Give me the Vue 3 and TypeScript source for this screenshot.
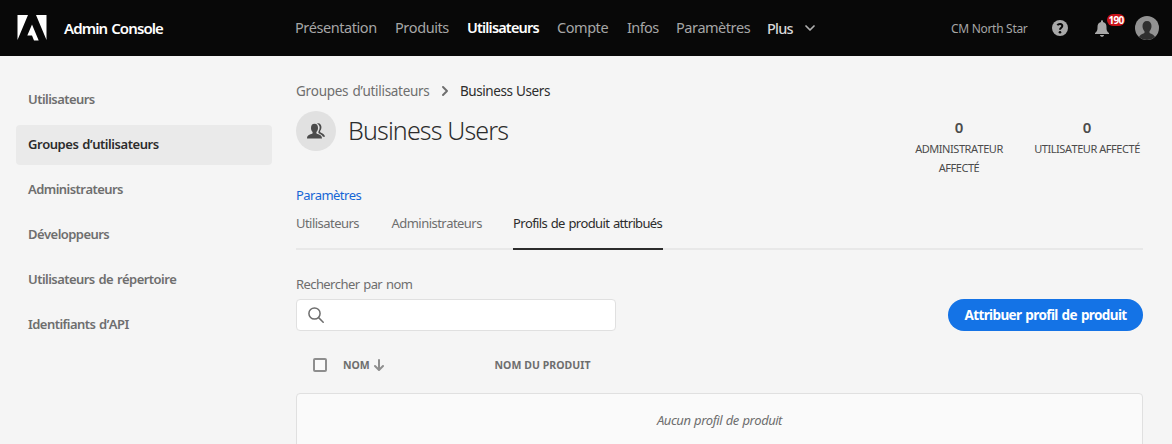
<script setup lang="ts">
interface NavItem { label: string; width: number; tracking: number; active?: boolean }

const navItems: NavItem[] = [
  { label: 'Présentation', width: 82, tracking: -0.45 },
  { label: 'Produits', width: 54, tracking: -0.45 },
  { label: 'Utilisateurs', width: 72, tracking: -0.83, active: true },
  { label: 'Compte', width: 52, tracking: -0.45 },
  { label: 'Infos', width: 31, tracking: -0.6 },
  { label: 'Paramètres', width: 73, tracking: -0.5 },
]
const sideItems = [
  'Utilisateurs',
  'Groupes d’utilisateurs',
  'Administrateurs',
  'Développeurs',
  'Utilisateurs de répertoire',
  'Identifiants d’API',
]
const activeSide = 1
const tabs = [
  { label: 'Utilisateurs', width: 63.5 },
  { label: 'Administrateurs', width: 89.5 },
  { label: 'Profils de produit attribués', width: 150 },
]
const activeTab = 2
</script>

<template>
  <div class="app">
    <header class="topbar">
      <svg class="logo" width="30" height="26" viewBox="0 0 30 26" fill="#fff">
        <path d="M0.5 0H11L0.5 25ZM19 0H29.500V25ZM15 9.500L21.700 25.500H17L15 20.500H10.300Z" />
      </svg>
      <span class="brand">Admin Console</span>
      <nav class="nav">
        <a
          v-for="item in navItems"
          :key="item.label"
          :class="{ active: item.active }"
          :style="{ width: item.width + 'px', letterSpacing: item.tracking + 'px' }"
        >{{ item.label }}</a>
        <a class="more">Plus
          <svg width="10" height="6" viewBox="0 0 10 6" fill="none" stroke="#b0b0b0" stroke-width="1.700" stroke-linecap="round" stroke-linejoin="round">
            <path d="M1 1L5 5L9 1" />
          </svg>
        </a>
      </nav>
      <span class="org">CM North Star</span>
      <svg class="help" width="16" height="16" viewBox="0 0 16 16">
        <circle cx="8" cy="8" r="8" fill="#a8a8a8" />
        <path d="M5.400 5.200C6.500 3.300 10.300 3.400 10.300 5.900C10.300 7.700 8 7.700 8 9.700" fill="none" stroke="#080808" stroke-width="2" />
        <circle cx="8" cy="12.200" r="1.300" fill="#080808" />
      </svg>
      <div class="bell">
        <svg width="14" height="17" viewBox="0 0 14 17" fill="#a8a8a8">
          <path d="M6 1.300C6 0 8 0 8 1.300V2C10.600 2.500 11.500 4.500 11.500 7C11.500 10.500 12 11.500 14 13V14H0V13C2 11.500 2.500 10.500 2.500 7C2.500 4.500 3.400 2.500 6 2ZM5 15H9C9 17.400 5 17.400 5 15Z" />
        </svg>
        <span class="badge">190</span>
      </div>
      <svg class="avatar" width="24" height="24" viewBox="0 0 24 24">
        <circle cx="12" cy="12" r="12" fill="#929292" />
        <path d="M12 5C14.900 5 16.500 7 16.500 10C16.500 12.500 15.600 14 14.500 15.200V16.800C15.500 18 18.500 18 20 20.900A12 12 0 0 1 4 20.900C5.500 18 8.500 18 9.500 16.800V15.200C8.400 14 7.500 12.500 7.500 10C7.500 7 9.100 5 12 5Z" fill="#303030" />
      </svg>
    </header>

    <div class="body">
      <aside class="sidebar">
        <a v-for="(item, i) in sideItems" :key="item" :class="{ active: i === activeSide }">{{ item }}</a>
      </aside>

      <main class="main">
        <div class="crumbs">
          <a>Groupes d’utilisateurs</a>
          <svg width="6" height="10" viewBox="0 0 6 10" fill="none" stroke="#6e6e6e" stroke-width="1.900" stroke-linecap="round" stroke-linejoin="round">
            <path d="M1 1L5 5L1 9" />
          </svg>
          <span>Business Users</span>
        </div>

        <div class="heading">
          <div class="group-icon">
            <svg width="18" height="16" viewBox="0 0 18 16" fill="#4b4b4b">
              <path d="M7.500 0.800C9.800 0.800 11 2.400 11 4.900C11 6.700 10.400 8 9.400 9V10.300C10.400 11.500 15 11.300 15 15.500H0C0 11.300 4.600 11.500 5.600 10.300V9C4.600 8 4 6.700 4 4.900C4 2.400 5.200 0.800 7.500 0.800Z" />
              <path d="M10 0.400C13.600 -0.600 15.300 3 14 6.400C13.600 7.400 12.900 7.900 13.100 8.800C13.600 10.200 17.500 10.300 18 13.800H16C15 11.200 12 10.900 11.400 9.700C11 8.600 12.400 7.500 12.600 5C12.800 2.800 12 1.400 10 0.400Z" />
            </svg>
          </div>
          <h1>Business Users</h1>
          <div class="stats">
            <div class="stat first"><b>0</b><span>ADMINISTRATEUR AFFECTÉ</span></div>
            <div class="stat second"><b>0</b><span>UTILISATEUR AFFECTÉ</span></div>
          </div>
        </div>

        <a class="settings">Paramètres</a>
        <div class="tabs">
          <a v-for="(tab, i) in tabs" :key="tab.label" :class="{ active: i === activeTab }" :style="{ width: tab.width + 'px' }">{{ tab.label }}</a>
        </div>

        <label class="search-label" for="search">Rechercher par nom</label>
        <div class="toolbar">
          <div class="search">
            <svg width="16" height="16" viewBox="0 0 16 16" fill="none" stroke="#6e6e6e" stroke-width="1.500" stroke-linecap="round">
              <circle cx="6.500" cy="6.500" r="5.600" />
              <path d="M10.600 10.600L15.200 15.200" />
            </svg>
            <input id="search" type="text" />
          </div>
          <button class="assign">Attribuer profil de produit</button>
        </div>

        <div class="table-head">
          <span class="check"></span>
          <span class="col-name">NOM</span>
          <svg class="sort" width="10" height="12" viewBox="0 0 10 12" fill="none" stroke="#8e8e8e" stroke-width="2" stroke-linecap="round" stroke-linejoin="round">
            <path d="M5 1V10.500M1 7L5 11L9 7" />
          </svg>
          <span class="col-product">NOM DU PRODUIT</span>
        </div>
        <div class="empty">Aucun profil de produit</div>
      </main>
    </div>
  </div>
</template>

<style>
body { background: #f5f5f5; overflow: hidden; }
</style>

<style scoped>
* { box-sizing: border-box; }
.app {
  width: 1172px;
  height: 444px;
  overflow: hidden;
  background: #f5f5f5;
  font-family: "Noto Sans", sans-serif;
  font-size: 13px;
  font-kerning: none;
  color: #6e6e6e;
  white-space: nowrap;
}
svg { display: block; flex: none; }
.topbar { display: flex; align-items: center; height: 56px; padding: 0 13px 0 17px; background: #080808; }
.brand { width: 231px; margin-left: 17px; color: #fff; font-size: 15px; font-weight: 600; letter-spacing: -0.9px; word-spacing: 1px; }
.nav { display: flex; gap: 18px; width: 656px; padding-bottom: 2px; color: #a6a6a6; font-size: 14.500px; line-height: 20px; }
.nav a { flex: none; }
.nav .active { color: #fff; font-weight: 600; }
.nav .more { display: flex; align-items: center; gap: 12.500px; padding-top: 1px; color: #d8d8d8; font-weight: 500; letter-spacing: -0.8px; }
.org { width: 77px; color: #a6a6a6; font-size: 12px; letter-spacing: -0.3px; }
.help { margin-left: 24px; }
.bell { position: relative; margin-left: 27px; }
.badge {
  position: absolute;
  top: -6px;
  left: 12px;
  width: 18px;
  height: 12px;
  border-radius: 6px;
  background: #c9131a;
  color: #fff;
  font-size: 10px;
  font-weight: 700;
  line-height: 12px;
  text-align: center;
  letter-spacing: -0.8px;
}
.avatar { margin-left: 26px; }
.body { display: flex; gap: 24px; padding: 0 29px 0 16px; }
.sidebar { display: flex; flex-direction: column; gap: 5px; width: 256px; padding-top: 24px; }
.sidebar a { height: 40px; padding-left: 12px; border-radius: 4px; font-weight: 600; line-height: 39px; letter-spacing: -0.55px; word-spacing: 1px; }
.sidebar .active { background: #eaeaea; color: #2c2c2c; letter-spacing: -0.45px; }
.main { width: 847px; padding-top: 25px; }
.crumbs { display: flex; align-items: center; height: 20px; letter-spacing: -0.43px; font-size: 13.500px; }
.crumbs a { width: 134px; letter-spacing: -0.3px; word-spacing: 1px; }
.crumbs svg { margin: 0 12px; }
.crumbs span { color: #2c2c2c; word-spacing: 0.500px; }
.heading { display: flex; height: 74px; margin-top: 10px; }
.group-icon { display: flex; align-items: center; justify-content: center; width: 40px; height: 40px; border-radius: 50%; background: #e1e1e1; }
h1 { margin: 0 0 0 12px; color: #2c2c2c; font-size: 25px; font-weight: 300; line-height: 38px; letter-spacing: -0.85px; }
.stats { display: flex; margin-right: 1px; margin-left: auto; gap: 18px; color: #4b4b4b; text-align: center; }
.stat { display: flex; flex-direction: column; width: 110px; }
.stat b { height: 19px; padding-top: 6px; font-size: 15px; font-weight: 600; line-height: 20px; }
.stat span { margin-top: 9px; font-size: 11px; font-weight: 400; line-height: 19px; white-space: normal; letter-spacing: -0.45px; }
.settings { display: block; height: 20px; color: #1566d6; line-height: 20px; letter-spacing: -0.58px; }
.tabs { display: flex; gap: 32px; height: 46px; margin-top: -1px; border-bottom: 2px solid #e8e8e8; line-height: 38px; letter-spacing: -0.54px; }
.tabs .active { height: 46px; border-bottom: 2px solid #2c2c2c; color: #2c2c2c; letter-spacing: -0.65px; word-spacing: 1px; }
.search-label { display: block; height: 20px; margin-top: 24px; line-height: 20px; letter-spacing: -0.59px; word-spacing: 1px; }
.toolbar { display: flex; justify-content: space-between; margin-top: 5px; }
.search { display: flex; align-items: center; width: 320px; height: 32px; padding-left: 11px; border: 1px solid #e0e0e0; border-radius: 4px; background: #fff; }
.search input { flex: 1; min-width: 0; margin-left: 8px; border: 0; outline: 0; background: transparent; }
.assign { width: 195px; height: 32px; padding: 0; border: 0; border-radius: 16px; background: #1473e6; color: #fff; font: 700 13.500px/32px "Noto Sans", sans-serif; letter-spacing: -0.61px; word-spacing: 1px; }
.table-head { display: flex; align-items: center; height: 20px; margin-top: 24px; padding-left: 17px; font-size: 10.500px; font-weight: 700; }
.check { width: 14px; height: 14px; border: 2px solid #8e8e8e; border-radius: 2px; background: #fafafa; }
.col-name { width: 27px; margin-left: 16px; letter-spacing: -0.1px; }
.sort { margin-left: 4px; }
.col-product { margin-left: 110.500px; letter-spacing: 0.05px; }
.empty { height: 60px; margin-top: 18px; border: 1px solid #e0e0e0; border-radius: 4px; background: #fafafa; font-style: italic; line-height: 52px; text-align: center; letter-spacing: -0.48px; word-spacing: 0.800px; }
</style>
